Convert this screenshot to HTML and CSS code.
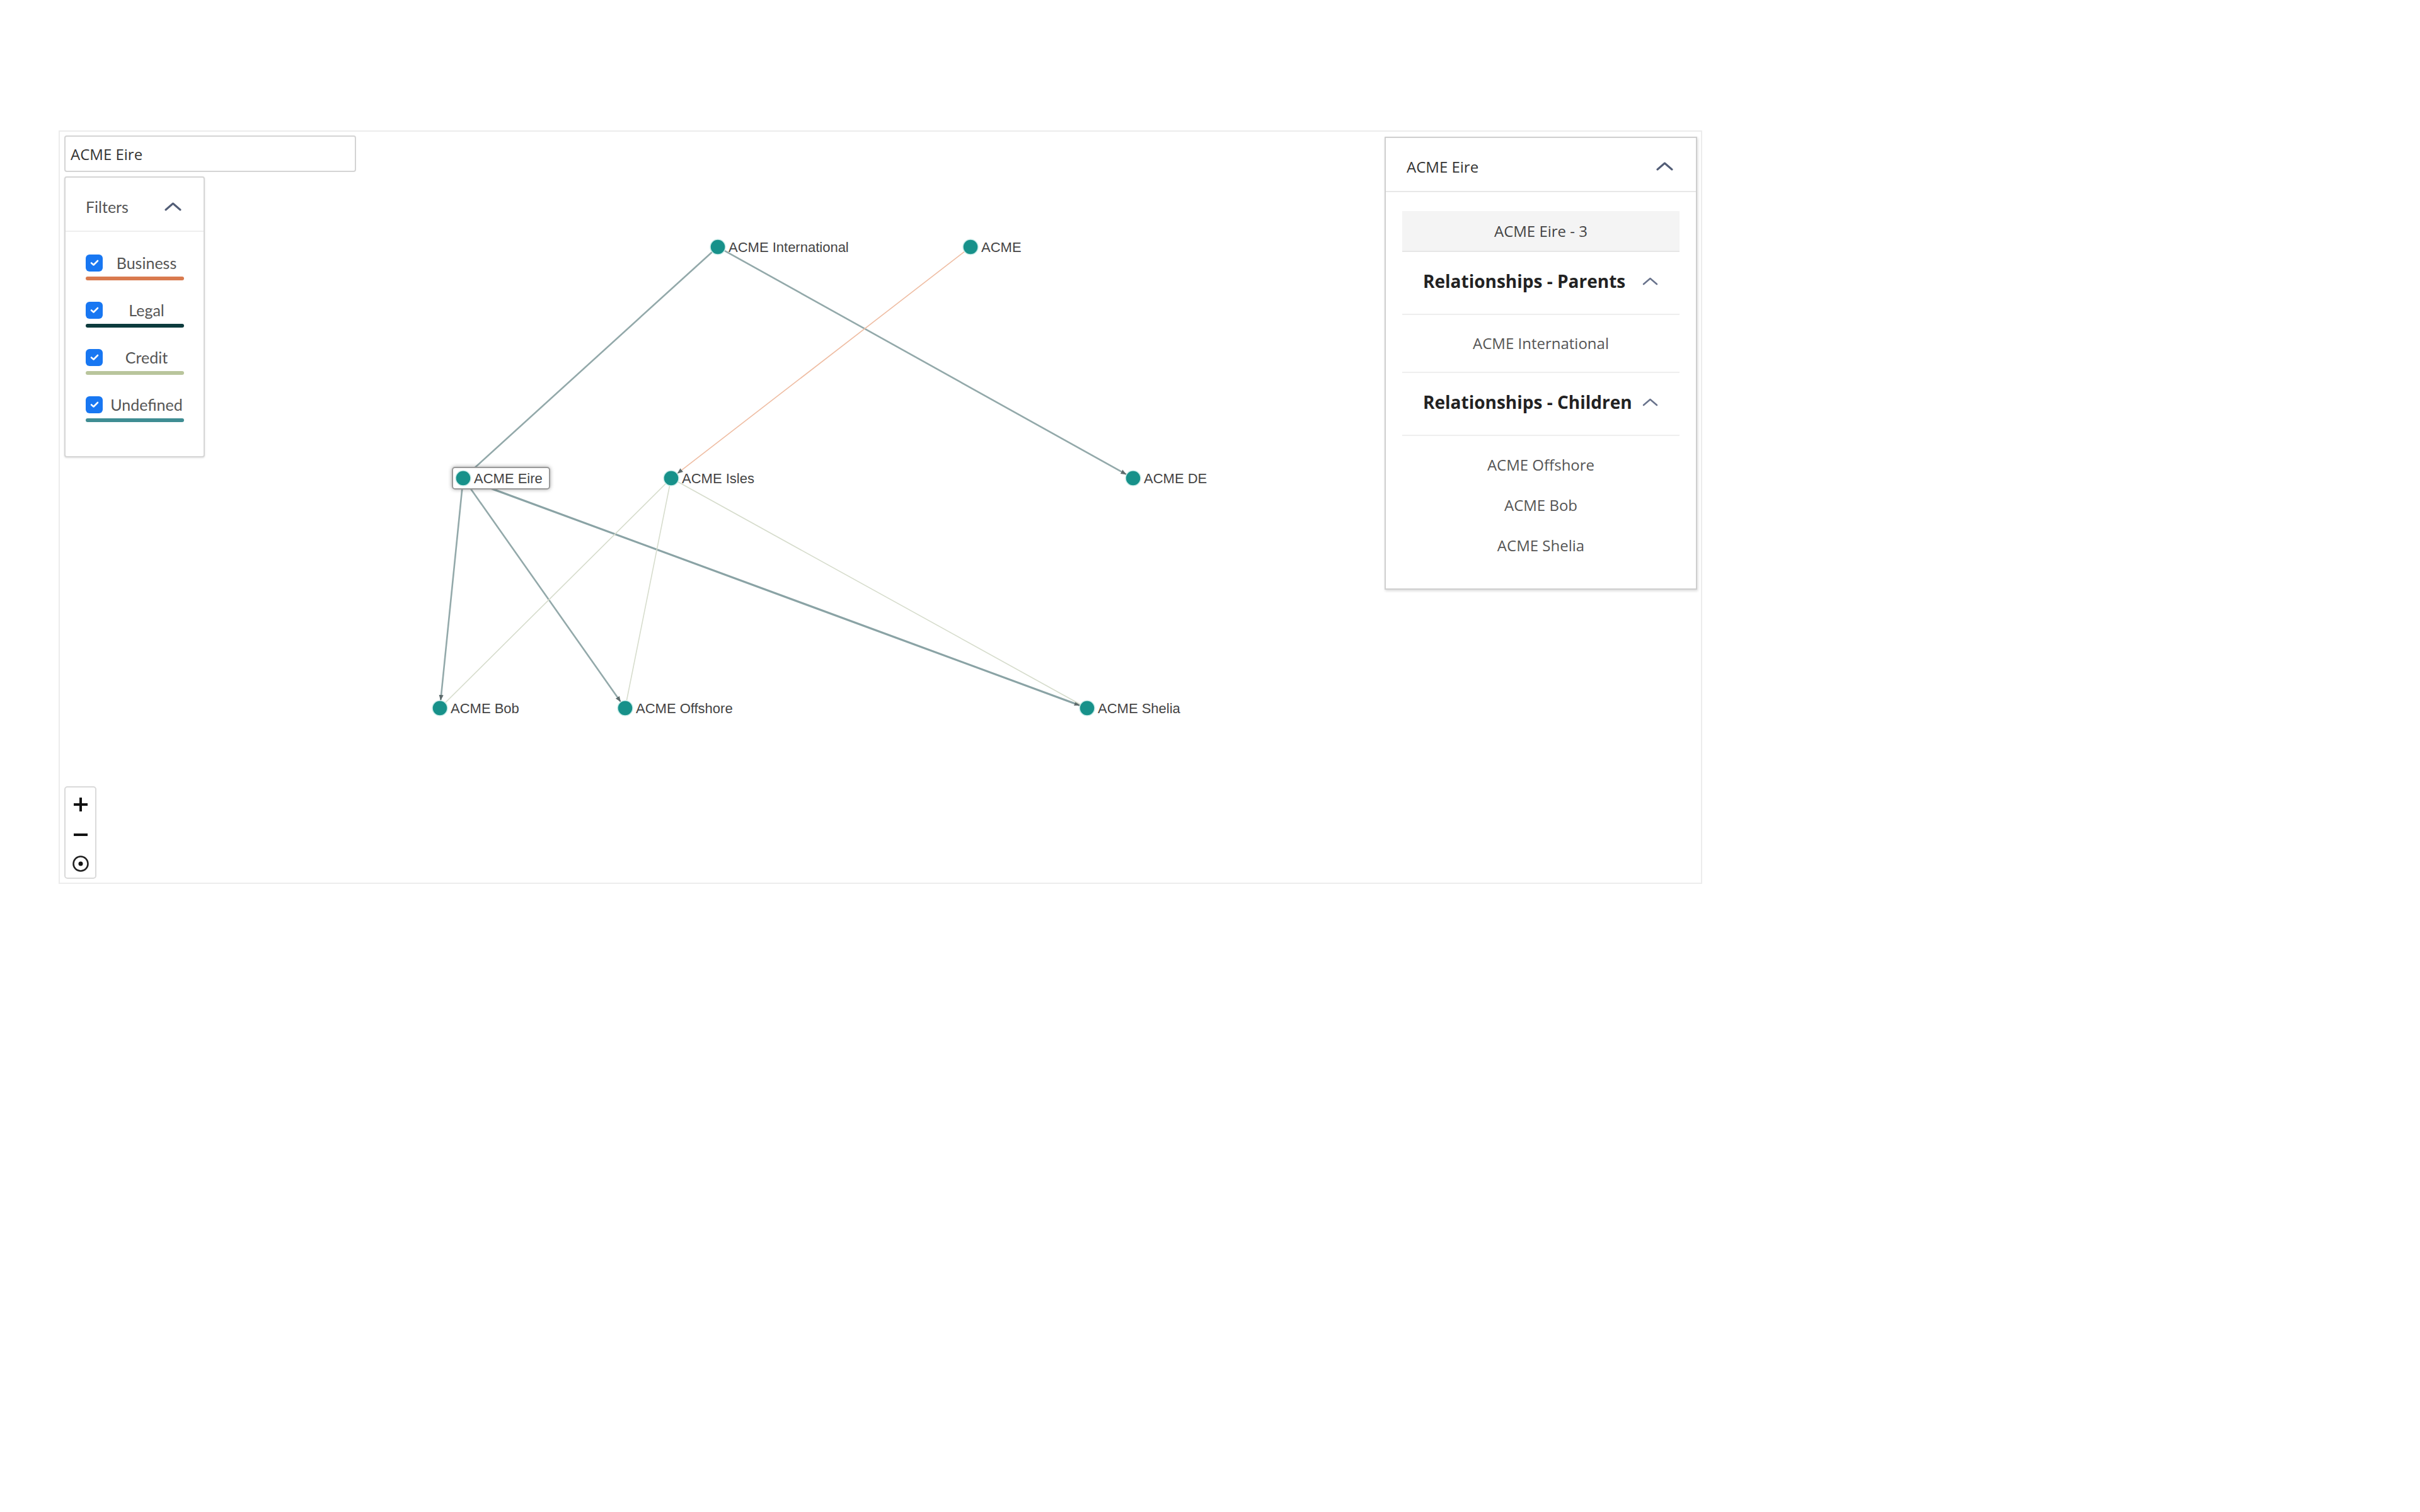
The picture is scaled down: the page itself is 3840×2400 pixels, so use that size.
FILE: index.html
```html
<!DOCTYPE html>
<html lang="en">

<head>
    <meta charset="UTF-8">
    <title>Entity Relationships</title>
    <link rel="stylesheet" href="styles.css">
</head>

<body>
    <div class="graph">
        <svg class="canvas" xmlns="http://www.w3.org/2000/svg">
            <defs>
                <marker id="arrow" viewBox="0 0 10 10" refX="9" refY="5" markerWidth="9" markerHeight="9" markerUnits="userSpaceOnUse" orient="auto">
                    <path d="M0 1 L10 5 L0 9 z" fill="#5d6b6c"></path>
                </marker>
            </defs>
            <g transform="translate(-95 -209)">
                <!-- edges -->
                <line class="edge undefined" x1="1130" y1="400" x2="744.6" y2="750.3"></line>
                <line class="edge undefined" x1="1149.5" y1="397.8" x2="1786.6" y2="752.7" marker-end="url(#arrow)"></line>
                <line class="edge business" x1="1530.5" y1="399.3" x2="1075.3" y2="751.1" marker-end="url(#arrow)"></line>
                <line class="edge undefined" x1="733.8" y1="771" x2="699.3" y2="1111.1" marker-end="url(#arrow)"></line>
                <line class="edge undefined" x1="741.9" y1="768.8" x2="984.5" y2="1113.4" marker-end="url(#arrow)"></line>
                <line class="edge undefined heavy" x1="746.3" y1="763.2" x2="1712.8" y2="1119.5" marker-end="url(#arrow)"></line>
                <line class="edge credit" x1="1056.5" y1="767.5" x2="707.2" y2="1114.8"></line>
                <line class="edge credit" x1="1062.6" y1="770.8" x2="994.5" y2="1111.2"></line>
                <line class="edge credit" x1="1075.5" y1="764.8" x2="1713.6" y2="1117.7"></line>

                <!-- selected node -->
                <rect class="node-focus" x="718" y="742" width="154" height="34" rx="4"></rect>

                <!-- nodes -->
                <circle class="node" cx="1139" cy="392" r="12"></circle>
                <text class="node-label" x="1156" y="392">ACME International</text>
                <circle class="node" cx="1540" cy="392" r="12"></circle>
                <text class="node-label" x="1557" y="392">ACME</text>
                <circle class="node" cx="735" cy="759" r="12"></circle>
                <text class="node-label" x="752" y="759">ACME Eire</text>
                <circle class="node" cx="1065" cy="759" r="12"></circle>
                <text class="node-label" x="1082" y="759">ACME Isles</text>
                <circle class="node" cx="1798" cy="759" r="12"></circle>
                <text class="node-label" x="1815" y="759">ACME DE</text>
                <circle class="node" cx="698" cy="1124" r="12"></circle>
                <text class="node-label" x="715" y="1124">ACME Bob</text>
                <circle class="node" cx="992" cy="1124" r="12"></circle>
                <text class="node-label" x="1009" y="1124">ACME Offshore</text>
                <circle class="node" cx="1725" cy="1124" r="12"></circle>
                <text class="node-label" x="1742" y="1124">ACME Shelia</text>
            </g>
        </svg>

        <div class="side">
            <input type="text" class="search" value="ACME Eire">
            <div class="filters">
                <div class="filters-head">
                    <span>Filters</span>
                    <svg class="chevron" width="27" height="14" viewBox="0 0 27 14"><polyline points="2,12 13.5,2 25,12"></polyline></svg>
                </div>
                <div class="filters-body">
                    <div class="filter">
                        <div class="filter-line">
                            <span class="box"><svg width="16" height="16" viewBox="0 0 16 16"><polyline points="3,8.5 6.5,11.5 13,5"></polyline></svg></span>
                            <span class="filter-name">Business</span>
                        </div>
                        <div class="swatch business"></div>
                    </div>
                    <div class="filter">
                        <div class="filter-line">
                            <span class="box"><svg width="16" height="16" viewBox="0 0 16 16"><polyline points="3,8.5 6.5,11.5 13,5"></polyline></svg></span>
                            <span class="filter-name">Legal</span>
                        </div>
                        <div class="swatch legal"></div>
                    </div>
                    <div class="filter">
                        <div class="filter-line">
                            <span class="box"><svg width="16" height="16" viewBox="0 0 16 16"><polyline points="3,8.5 6.5,11.5 13,5"></polyline></svg></span>
                            <span class="filter-name">Credit</span>
                        </div>
                        <div class="swatch credit"></div>
                    </div>
                    <div class="filter">
                        <div class="filter-line">
                            <span class="box"><svg width="16" height="16" viewBox="0 0 16 16"><polyline points="3,8.5 6.5,11.5 13,5"></polyline></svg></span>
                            <span class="filter-name">Undefined</span>
                        </div>
                        <div class="swatch undefined"></div>
                    </div>
                </div>
            </div>
        </div>

        <div class="details">
            <div class="details-head">
                <span>ACME Eire</span>
                <svg class="chevron" width="27" height="14" viewBox="0 0 27 14"><polyline points="2,12 13.5,2 25,12"></polyline></svg>
            </div>
            <div class="details-body">
                <div class="current">ACME Eire - 3</div>
                <div class="rel-head">
                    <span>Relationships - Parents</span>
                    <svg class="chevron small" width="25" height="13" viewBox="0 0 25 13"><polyline points="2,11 12.5,2 23,11"></polyline></svg>
                </div>
                <div class="rel-list">
                    <div class="rel-item">ACME International</div>
                </div>
                <div class="rel-head">
                    <span>Relationships - Children</span>
                    <svg class="chevron small" width="25" height="13" viewBox="0 0 25 13"><polyline points="2,11 12.5,2 23,11"></polyline></svg>
                </div>
                <div class="rel-list last">
                    <div class="rel-item">ACME Offshore</div>
                    <div class="rel-item">ACME Bob</div>
                    <div class="rel-item">ACME Shelia</div>
                </div>
            </div>
        </div>

        <div class="zoom">
            <button class="zoom-btn" title="Zoom in">
                <svg width="24" height="24" viewBox="0 0 24 24"><path d="M12 1 V23 M1 12 H23"></path></svg>
            </button>
            <button class="zoom-btn" title="Zoom out">
                <svg width="24" height="24" viewBox="0 0 24 24"><path d="M1 12 H23"></path></svg>
            </button>
            <button class="zoom-btn last" title="Reset">
                <svg width="28" height="28" viewBox="0 0 28 28"><circle class="ring" cx="14" cy="14" r="11.5"></circle><circle class="dot" cx="14" cy="14" r="3.5"></circle></svg>
            </button>
        </div>
    </div>
</body>

</html>
```

FILE: styles.css
```css
body {
    margin: 0;
    background: #ffffff;
    font-family: 'Open Sans', sans-serif;
}

.graph {
    position: relative;
    box-sizing: border-box;
    width: 2608px;
    height: 1196px;
    margin: 207px 0 0 93px;
    border: 2px solid #ececec;
    background: #ffffff;
}

.canvas {
    position: absolute;
    top: 0;
    left: 0;
    width: 100%;
    height: 100%;
}

.edge {
    fill: none;
    stroke-linecap: round;
}

.edge.undefined {
    stroke: #93a9aa;
    stroke-width: 2.6;
}

.edge.heavy {
    stroke: #8aa3a5;
    stroke-width: 3.2;
}

.edge.business {
    stroke: #efbda3;
    stroke-width: 1.6;
}

.edge.credit {
    stroke: #d6dccc;
    stroke-width: 1.6;
}

.node {
    fill: #17918a;
    stroke: #c9ebe8;
    stroke-width: 1.5;
}

.node-label {
    font-family: 'Liberation Sans', Arial, sans-serif;
    font-size: 22px;
    fill: #444444;
    dominant-baseline: central;
}

.node-focus {
    fill: #ffffff;
    stroke: #9a9a9a;
    stroke-width: 2;
    filter: drop-shadow(0 0 3px rgba(0, 0, 0, 0.35));
}

/* left overlay */

.side {
    position: absolute;
    top: 6px;
    left: 7px;
}

.search {
    display: block;
    box-sizing: border-box;
    width: 463px;
    height: 58px;
    margin: 0 0 7px;
    padding: 0 8px;
    border: 2px solid #d4d4d4;
    border-radius: 4px;
    font-family: 'Open Sans', sans-serif;
    font-size: 24px;
    color: #333333;
    background: #ffffff;
}

.filters {
    width: 223px;
    box-sizing: border-box;
    border: 2px solid #d6d6d6;
    border-radius: 4px;
    background: #ffffff;
    box-shadow: 0 1px 3px rgba(0, 0, 0, 0.12);
    font-family: Lato, sans-serif;
}

.filters-head {
    display: flex;
    align-items: center;
    justify-content: space-between;
    height: 86px;
    box-sizing: border-box;
    padding: 8px 35px 0 32px;
    border-bottom: 2px solid #eeeeee;
    font-size: 25px;
    color: #555555;
}

.filters-body {
    padding: 36px 31px 54px 32px;
}

.filter {
    margin-bottom: 34px;
}

.filter:last-child {
    margin-bottom: 0;
}

.filter-line {
    display: flex;
    align-items: center;
    height: 26px;
}

.box {
    display: flex;
    align-items: center;
    justify-content: center;
    width: 27px;
    height: 27px;
    border-radius: 6px;
    background: #1877f2;
    flex-shrink: 0;
}

.box polyline {
    fill: none;
    stroke: #ffffff;
    stroke-width: 2.6;
    stroke-linecap: round;
    stroke-linejoin: round;
}

.filter-name {
    flex: 1;
    margin-left: 10px;
    text-align: center;
    font-size: 25px;
    line-height: 26px;
    color: #555555;
}

.swatch {
    height: 6px;
    margin-top: 9px;
    border-radius: 3px;
}

.swatch.business {
    background: #d97a4e;
}

.swatch.legal {
    background: #0d3b3d;
}

.swatch.credit {
    background: #b9c59c;
}

.swatch.undefined {
    background: #3f8d93;
}

.chevron polyline {
    fill: none;
    stroke: #525d76;
    stroke-width: 3;
    stroke-linecap: round;
    stroke-linejoin: round;
}

.chevron.small polyline {
    stroke: #69738c;
    stroke-width: 2.6;
}

/* right overlay */

.details {
    position: absolute;
    top: 8px;
    right: 6px;
    width: 496px;
    box-sizing: border-box;
    border: 2px solid #cfcfcf;
    background: #ffffff;
    box-shadow: 1px 2px 4px rgba(0, 0, 0, 0.15);
}

.details-head {
    display: flex;
    align-items: center;
    justify-content: space-between;
    height: 86px;
    box-sizing: border-box;
    padding: 6px 36px 0 33px;
    border-bottom: 2px solid #e8e8e8;
    font-size: 24px;
    color: #333333;
}

.details-body {
    padding: 30px 26px 36px;
}

.current {
    height: 63px;
    line-height: 63px;
    border-bottom: 2px solid #e6e6e6;
    background: #f4f4f4;
    text-align: center;
    font-size: 24px;
    color: #444444;
}

.rel-head {
    display: flex;
    align-items: center;
    justify-content: space-between;
    height: 100px;
    box-sizing: border-box;
    padding: 0 34px 6px 33px;
    border-bottom: 2px solid #eeeeee;
    font-size: 28px;
    font-weight: 700;
    color: #222222;
}

.rel-list {
    padding: 13px 0;
    border-bottom: 2px solid #eeeeee;
}

.rel-list.last {
    padding: 14px 0 0;
    border-bottom: none;
}

.rel-item {
    height: 64px;
    line-height: 64px;
    text-align: center;
    font-size: 24px;
    color: #555555;
}

/* zoom controls */

.zoom {
    position: absolute;
    left: 7px;
    bottom: 6px;
    display: flex;
    flex-direction: column;
    width: 51px;
    box-sizing: border-box;
    padding-top: 3px;
    border: 2px solid #dadada;
    border-radius: 5px;
    background: #ffffff;
}

.zoom-btn {
    display: flex;
    align-items: center;
    justify-content: center;
    height: 48px;
    padding: 0;
    border: none;
    background: none;
    cursor: pointer;
}

.zoom-btn.last {
    height: 44px;
}

.zoom-btn path {
    stroke: #111111;
    stroke-width: 4;
    fill: none;
}

.zoom-btn .ring {
    fill: none;
    stroke: #222222;
    stroke-width: 2.6;
}

.zoom-btn .dot {
    fill: #111111;
}
```
